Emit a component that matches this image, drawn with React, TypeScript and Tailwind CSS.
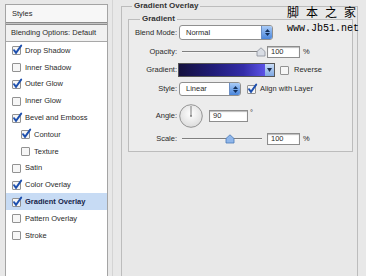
import React from 'react'

type Effect = { name: string; on: boolean; indent?: boolean; selected?: boolean }

const effects: Effect[] = [
  { name: 'Drop Shadow', on: true },
  { name: 'Inner Shadow', on: false },
  { name: 'Outer Glow', on: true },
  { name: 'Inner Glow', on: false },
  { name: 'Bevel and Emboss', on: true },
  { name: 'Contour', on: true, indent: true },
  { name: 'Texture', on: false, indent: true },
  { name: 'Satin', on: false },
  { name: 'Color Overlay', on: true },
  { name: 'Gradient Overlay', on: true, selected: true },
  { name: 'Pattern Overlay', on: false },
  { name: 'Stroke', on: false },
]

function Check({ on }: { on: boolean }) {
  return (
    <svg width="10" height="10" viewBox="0 0 10 10" className="shrink-0 overflow-visible">
      <rect x="0.5" y="1.5" width="8" height="8" rx="0.5" fill="#f6f6f6" stroke="#929292" />
      {on && <path d="M2 5.2l2 2.6L9.2 0.6" stroke="#1d4fae" strokeWidth="1.9" fill="none" strokeLinecap="round" />}
    </svg>
  )
}

function Stepper() {
  return (
    <div className="w-[11px] h-full bg-[linear-gradient(#a9cbf7,#4a86dc)] border-l border-[#6b8fc6] flex flex-col items-center justify-center gap-[1px]">
      <svg width="5" height="3" viewBox="0 0 5 3"><path d="M0 3L2.5 0L5 3z" fill="#12305c" /></svg>
      <svg width="5" height="3" viewBox="0 0 5 3"><path d="M0 0L2.5 3L5 0z" fill="#12305c" /></svg>
    </div>
  )
}

function Field({ value, className }: { value: string; className: string }) {
  return (
    <div className={'h-[12px] bg-white border border-[#8d8d8d] shadow-[inset_0_1px_1px_#bbb] pl-[3px] leading-[10px] ' + className}>
      {value}
    </div>
  )
}

function Thumb({ blue }: { blue?: boolean }) {
  return (
    <svg width="10" height="10" viewBox="0 0 10 10">
      <path
        d="M1 9V4.5L5 0.8L9 4.5V9z"
        fill={blue ? '#8fb6ea' : '#d9dde4'}
        stroke={blue ? '#4a78b8' : '#8a8f99'}
        strokeWidth="0.8"
      />
    </svg>
  )
}

function Slider({ thumbClass, blue }: { thumbClass: string; blue?: boolean }) {
  return (
    <div className="relative w-[84px] h-full">
      <div className="absolute left-[2px] right-[2px] top-[6px] h-[2px] bg-[#7f7f7f] border-b border-[#f4f4f4]" />
      <div className={'absolute top-[2px] ' + thumbClass}>
        <Thumb blue={blue} />
      </div>
    </div>
  )
}

export default function App() {
  return (
    <div className="relative w-[366px] h-[276px] overflow-hidden bg-[#e8e8e8] flex font-['Liberation_Sans',Arial,sans-serif] text-[7.5px] text-[#2a2a2a]">
      {/* Styles list */}
      <div className="pl-[5px] pt-[4px] shrink-0">
        <div className="w-[103px] h-[300px] bg-white border border-[#a4a4a4] flex flex-col">
          <div className="h-[17px] pl-[6px] flex items-center bg-[#f7f7f7]">Styles</div>
          <div className="h-[3px] border-y border-[#8c8c8c] bg-[#c4c4c4]" />
          <div className="h-[17px] pl-[5px] flex items-center bg-[#f1f1f1] border-b border-[#a8a8a8]">
            Blending Options: Default
          </div>
          {effects.map((e) => (
            <div
              key={e.name}
              className={
                'h-[16.8px] flex items-center gap-[3px] ' +
                (e.indent ? 'pl-[15px] ' : 'pl-[6px] ') +
                (e.selected ? 'bg-[#c7dbf4] text-[#16244a] font-bold' : '')
              }
            >
              <Check on={e.on} />
              <span>{e.name}</span>
            </div>
          ))}
        </div>
      </div>

      <div className="ml-[4px] w-px h-full bg-[#d4d4d4] shrink-0" />

      {/* Gradient Overlay panel */}
      <fieldset className="ml-[8px] mt-[1px] w-[237px] h-[300px] border border-[#bcbcbc] shrink-0">
        <legend className="ml-[10px] px-[2px] text-[8px] leading-[10px] font-bold text-[#333]">Gradient Overlay</legend>

        <fieldset className="ml-[6px] mt-[3px] w-[225px] border border-[#bcbcbc] bg-[#ececec] pb-[5px]">
          <legend className="ml-[11px] px-[2px] text-[8px] leading-[10px] font-bold text-[#333]">Gradient</legend>

          {/* Blend Mode */}
          <div className="mt-[1px] h-[15px] flex items-center">
            <span className="w-[48px] text-right">Blend Mode:</span>
            <div className="ml-[2px] flex h-[15px] w-[94px] border border-[#8f8f8f] rounded-[3px] bg-white overflow-hidden">
              <span className="flex-1 pl-[6px] leading-[13px]">Normal</span>
              <Stepper />
            </div>
          </div>

          {/* Opacity */}
          <div className="mt-[5px] h-[14px] flex items-center">
            <span className="w-[48px] text-right">Opacity:</span>
            <div className="ml-[3px] h-full">
              <Slider thumbClass="left-[76px]" />
            </div>
            <Field value="100" className="ml-[3px] w-[33px]" />
            <span className="ml-[3px]">%</span>
          </div>

          {/* Gradient */}
          <div className="mt-[4px] h-[14px] flex items-center">
            <span className="w-[48px] text-right">Gradient:</span>
            <div className="ml-[1px] flex h-[14px] border border-[#555]">
              <div className="w-[86px] h-full bg-[linear-gradient(to_right,#15113e,#201c78_40%,#332ca8_75%,#5b52e6)]" />
              <div className="w-[9px] h-full bg-[linear-gradient(#c9dcf6,#7ea7e2)] flex items-center justify-center">
                <svg width="5" height="4" viewBox="0 0 5 4"><path d="M0 0L2.5 4L5 0z" fill="#1a2a4a" /></svg>
              </div>
            </div>
            <div className="ml-[5px] flex items-center gap-[4px]">
              <Check on={false} />
              <span>Reverse</span>
            </div>
          </div>

          {/* Style */}
          <div className="mt-[5px] h-[14px] flex items-center">
            <span className="w-[48px] text-right">Style:</span>
            <div className="ml-[2px] flex h-[14px] w-[62px] border border-[#8f8f8f] rounded-[3px] bg-white overflow-hidden">
              <span className="flex-1 pl-[6px] leading-[12px]">Linear</span>
              <Stepper />
            </div>
            <div className="ml-[6px] flex items-center gap-[3px]">
              <Check on />
              <span>Align with Layer</span>
            </div>
          </div>

          {/* Angle */}
          <div className="mt-[8px] h-[24px] flex items-center">
            <span className="w-[48px] text-right">Angle:</span>
            <svg width="24" height="24" viewBox="0 0 24 24" className="ml-[2px]">
              <defs>
                <radialGradient id="dial" cx="50%" cy="40%" r="60%">
                  <stop offset="0%" stopColor="#ffffff" />
                  <stop offset="100%" stopColor="#dcdcdc" />
                </radialGradient>
              </defs>
              <circle cx="12" cy="12" r="11.3" fill="url(#dial)" stroke="#8a8a8a" strokeWidth="0.9" />
              <line x1="12" y1="12" x2="12" y2="2" stroke="#7a7a7a" strokeWidth="1" />
              <circle cx="12" cy="12" r="0.9" fill="#7a7a7a" />
            </svg>
            <Field value="90" className="ml-[6px] w-[39px]" />
            <span className="ml-[2px] self-start mt-[3px]">°</span>
          </div>

          {/* Scale */}
          <div className="mt-[4px] h-[14px] flex items-center">
            <span className="w-[48px] text-right">Scale:</span>
            <div className="ml-[3px] h-full">
              <Slider thumbClass="left-[45px]" blue />
            </div>
            <Field value="100" className="ml-[3px] w-[33px]" />
            <span className="ml-[3px]">%</span>
          </div>
        </fieldset>
      </fieldset>

      {/* site watermark */}
      <div className="absolute left-[287px] top-[5px] flex flex-col items-start">
        <div className="flex gap-[7px] text-[12px] leading-[14px] text-black font-['Noto_Sans_CJK_SC',sans-serif]">
          <span>脚</span>
          <span>本</span>
          <span>之</span>
          <span>家</span>
        </div>
        <div className="mt-[4px] text-[10px] leading-[11px] text-black font-['Liberation_Mono',monospace]">www.Jb51.net</div>
      </div>
    </div>
  )
}
